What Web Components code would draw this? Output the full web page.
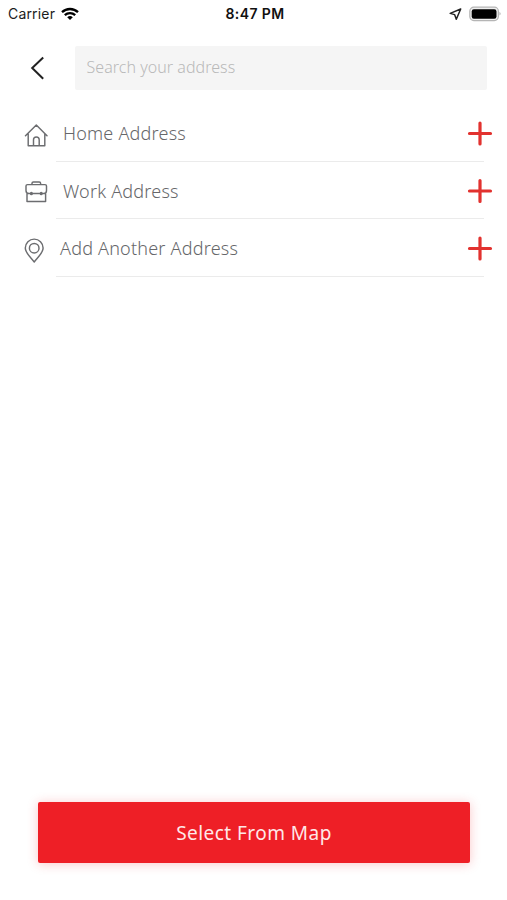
<!DOCTYPE html>
<html lang="en">
<head>
<meta charset="utf-8">
<title>Select address</title>
<style>html,body{margin:0;height:100%;background:#fff}</style>
</head>
<body>
<address-screen></address-screen>
<script>
const define = (name, html) => customElements.define(name, class extends HTMLElement {
  constructor() {
    super();
    this.attachShadow({ mode: 'open' }).innerHTML = html;
  }
});

define('status-bar', `<style>
:host{display:grid;grid-template-columns:1fr auto 1fr;align-items:center;height:28px;box-sizing:border-box;padding:0 6px 0 8px;font:14px/20px Inter,sans-serif;color:#1c1c1c}
.left,.right{display:flex;align-items:center}
.left{gap:6px;letter-spacing:.18px}
.time{font-weight:600;font-size:14px;letter-spacing:.42px;color:#111;padding-left:1px}
.right{justify-content:flex-end;gap:7px}
svg{display:block}
.wifi{margin-top:-1px}
.battery{margin-top:-1px}
</style>
<div class="left"><span>Carrier</span>
<svg class="wifi" width="18" height="14" viewBox="0 0 18 14" fill="none" stroke="#000" stroke-width="2.3"><path d="M1 5.2C5.5.9 12.500.9 17 5.200M3.800 8.200C6.800 5.400 11.200 5.400 14.200 8.200"/><path d="M6.200 10.300Q9 7.900 11.800 10.300L9 13Z" fill="#000" stroke="none"/></svg></div>
<span class="time">8:47 PM</span>
<div class="right">
<svg width="13" height="13" viewBox="0 0 13 13" fill="none" stroke="#222" stroke-width="1.500" stroke-linejoin="round"><path d="M11.700 1L1.200 5.400L5.600 6.600L7.300 11.200Z"/></svg>
<svg class="battery" width="32" height="16" viewBox="0 0 32 16"><rect x=".8" y="1.200" width="28.600" height="13.400" rx="4" fill="#eee" stroke="#b5b5b5" stroke-width="1.200"/><rect x="2.700" y="3.200" width="24.800" height="9.500" rx="2.200"/><path d="M30.500 5.800Q32.600 7.700 30.500 9.600Z" fill="#aaa"/></svg>
</div>`);

define('search-header', `<style>
:host{display:flex;align-items:center;height:44px;padding:0 20.500px 0 29px;margin-top:18px;gap:28.500px}
svg{display:block;flex:none}
.field{flex:1;height:44px;box-sizing:border-box;padding:0 12px;background:#f5f5f5;border-radius:2px;font:300 16px/42px "Noto Sans",sans-serif;letter-spacing:.04px;color:#b9b9b9}
</style>
<svg width="17" height="24" viewBox="0 0 17 24" fill="none" stroke="#222" stroke-width="2"><path d="M14.200 1.500L3.200 12L14.200 22.800"/></svg>
<div class="field"><slot></slot></div>`);

define('address-row', `<style>
:host{display:grid;grid-template-columns:24px 1fr 26px;height:57.500px;box-sizing:border-box;padding:0 14px 0 24px;background:linear-gradient(#ebebeb,#ebebeb) 56px bottom/calc(100% - 79px) 1px no-repeat}
.icon{padding-top:var(--icon-top,19px)}
.label{padding:14px 0 0 var(--label-gap,15px);font:300 18px/30px "Noto Sans",sans-serif;letter-spacing:.21px;color:#66676a;white-space:nowrap}
.plus{display:block;padding-top:var(--plus-top,16.500px)}
</style>
<div class="icon"><slot name="icon"></slot></div>
<div class="label"><slot></slot></div>
<svg class="plus" width="26" height="26" viewBox="0 0 26 26" stroke="#e2322f" stroke-width="3.200" stroke-linecap="round"><path d="M2.500 13H23.500M13 2.500V23.500"/></svg>`);

const paths = {
  home: '<path d="M1.500 12.800L12.300 2L23 12.800M4.200 10.800V22.800H20.800V10.800M9.500 22.800V16.800Q9.500 14 12.300 14Q15.200 14 15.200 16.800V22.800"/>',
  work: '<path d="M3.500 5.600H21Q22.500 5.600 22.500 7.100V11.500Q22.500 14.500 19.800 14.500H5Q2 14.500 2 11.500V7.100Q2 5.600 3.500 5.600ZM3 14V22.500H21.600V14M8 5.600V4.300Q8 3 9.400 3H15.200Q16.600 3 16.600 4.300V5.600"/><path d="M7.400 14.200V14.800M17.200 14.200V14.800" stroke-width="3"/>',
  pin: '<path d="M10.200 25C7.500 21 1.300 16.200 1.300 11A8.900 8.900 0 0 1 19.100 11C19.100 16.200 12.900 21 10.200 25Z"/><circle cx="10.200" cy="11.200" r="4.800"/>'
};
customElements.define('line-icon', class extends HTMLElement {
  constructor() {
    super();
    this.attachShadow({ mode: 'open' }).innerHTML = `<style>:host{display:block}svg{display:block}</style>
<svg width="24" height="26" viewBox="0 0 24 26" fill="none" stroke="#6c6d70" stroke-width="1.450" stroke-linejoin="round" stroke-linecap="round">${paths[this.getAttribute('name')]}</svg>`;
  }
});

define('primary-button', `<style>
:host{display:block;margin:0 37px 37px 38px}
button{display:block;width:100%;height:61px;border:0;border-radius:2px;padding:0;background:#ee1f26;box-shadow:0 1px 11px rgba(238,31,38,.25);color:#ffe8e8;font:400 19px/60px "Noto Sans",sans-serif;letter-spacing:.46px}
</style><button><slot></slot></button>`);

define('address-screen', `<style>
:host{display:flex;flex-direction:column;width:507px;height:900px;background:#fff}
main{flex:1;padding-top:14px}
</style>
<status-bar></status-bar>
<search-header>Search your address</search-header>
<main>
<address-row><line-icon slot="icon" name="home"></line-icon>Home Address</address-row>
<address-row style="--icon-top:17.500px;--plus-top:16px"><line-icon slot="icon" name="work"></line-icon>Work Address</address-row>
<address-row style="--label-gap:12px;--icon-top:18px"><line-icon slot="icon" name="pin"></line-icon>Add Another Address</address-row>
</main>
<primary-button>Select From Map</primary-button>`);
</script>
</body>
</html>
